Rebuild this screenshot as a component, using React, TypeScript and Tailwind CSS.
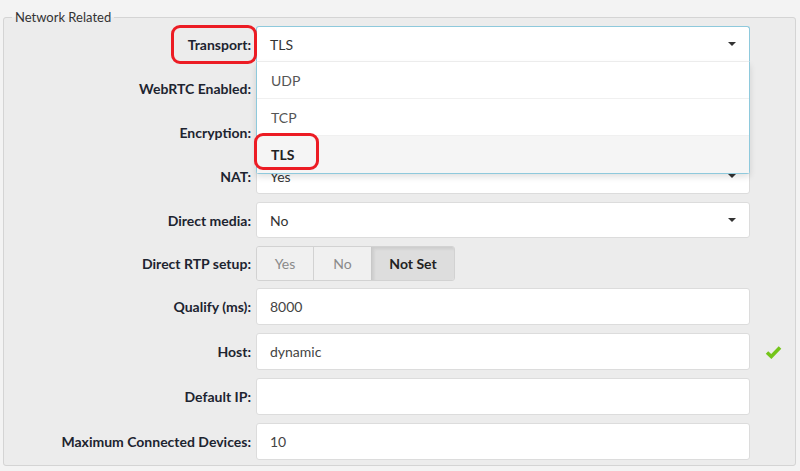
import React from "react";

const font = { fontFamily: "Lato, 'Open Sans', sans-serif" };

function Caret() {
  return (
    <span className="absolute right-[13px] top-1/2 -translate-y-1/2 w-0 h-0 border-x-[4px] border-x-transparent border-t-[4px] border-t-[#333]" />
  );
}

function Label({ children }: { children: React.ReactNode }) {
  return (
    <div className="w-[252px] shrink-0 pr-[5px] text-right text-[14px] font-bold text-[#1d2430]">
      {children}
    </div>
  );
}

function SelectBox({ value }: { value: string }) {
  return (
    <div className="relative w-[494px] h-[36px] flex items-center bg-white border border-[#dcdcdc] rounded-[3px] pl-[13px] text-[14px] text-[#333]">
      {value}
      <Caret />
    </div>
  );
}

function TextBox({ value }: { value: string }) {
  return (
    <div className="w-[494px] h-[37px] flex items-center bg-white border border-[#dcdcdc] rounded-[3px] pl-[13px] text-[14px] text-[#444]">
      {value}
    </div>
  );
}

function CheckMark() {
  return (
    <svg width="17" height="14" viewBox="0 0 17 14" className="ml-[15px]">
      <path d="M2 7.5 L6.3 11.5 L15 2.5" fill="none" stroke="#74c51a" strokeWidth="3.6" strokeLinejoin="miter" />
    </svg>
  );
}

export default function App() {
  const row = "flex items-center";
  return (
    <div className="relative w-[800px] h-[471px] bg-[#f3f3f3] overflow-hidden" style={font}>
      <fieldset className="ml-[3px] mt-[9px] w-[793px] border border-[#d4d4d4] rounded-[3px] bg-[#ececec] pt-[1px] pb-[5px]">
        <legend className="ml-[8px] px-[3px] text-[13px] leading-[16px] text-[#333]">Network Related</legend>
        <div className="flex flex-col gap-[8px]">
          <div className={row}>
            <Label>Transport:</Label>
            <div className="relative w-[494px]">
              <div className="relative h-[36px] flex items-center bg-white border border-[#8ec9dc] border-b-[#f0f0f0] rounded-t-[3px] pl-[13px] text-[14px] text-[#333]">
                TLS
                <Caret />
              </div>
              <div className="absolute left-0 top-full z-10 w-full bg-white border border-t-0 border-[#8ec9dc] rounded-b-[3px] shadow-[0_3px_6px_rgba(0,0,0,0.12)] text-[14px]">
                <div className="h-[37px] flex items-center pl-[14px] text-[#555] border-b border-[#f0f0f0]">UDP</div>
                <div className="h-[37px] flex items-center pl-[14px] text-[#555] border-b border-[#f0f0f0]">TCP</div>
                <div className="h-[37px] flex items-center pl-[14px] bg-[#f5f5f5] text-[#222] font-bold">TLS</div>
              </div>
            </div>
          </div>
          <div className={row}>
            <Label>WebRTC Enabled:</Label>
            <SelectBox value="" />
          </div>
          <div className={row}>
            <Label>Encryption:</Label>
            <SelectBox value="" />
          </div>
          <div className={row}>
            <Label>NAT:</Label>
            <SelectBox value="Yes" />
          </div>
          <div className={row}>
            <Label>Direct media:</Label>
            <SelectBox value="No" />
          </div>
          <div className={row}>
            <Label>Direct RTP setup:</Label>
            <div className="flex h-[35px] text-[14px] rounded-[3px] border border-[#d2d2d2] overflow-hidden">
              <div className="w-[57px] flex items-center justify-center bg-[#f0f0f0] text-[#8a8a8a] border-r border-[#d2d2d2]">Yes</div>
              <div className="w-[58px] flex items-center justify-center bg-[#f0f0f0] text-[#8a8a8a] border-r border-[#c8c8c8]">No</div>
              <div className="w-[82px] flex items-center justify-center bg-[#dddddd] text-[#222] font-bold shadow-[inset_2px_2px_3px_rgba(0,0,0,0.08)]">Not Set</div>
            </div>
          </div>
          <div className={`${row} -mt-px`}>
            <Label>Qualify (ms):</Label>
            <TextBox value="8000" />
          </div>
          <div className={row}>
            <Label>Host:</Label>
            <TextBox value="dynamic" />
            <CheckMark />
          </div>
          <div className={row}>
            <Label>Default IP:</Label>
            <TextBox value="" />
          </div>
          <div className={row}>
            <Label>Maximum Connected Devices:</Label>
            <TextBox value="10" />
          </div>
        </div>
      </fieldset>

      <div className="absolute left-[171px] top-[25px] w-[86px] h-[39px] border-[3px] border-[#ec1c24] rounded-[9px] pointer-events-none" />
      <div className="absolute left-[254px] top-[133px] w-[65px] h-[37px] border-[3px] border-[#ec1c24] rounded-[9px] pointer-events-none z-20" />
    </div>
  );
}
